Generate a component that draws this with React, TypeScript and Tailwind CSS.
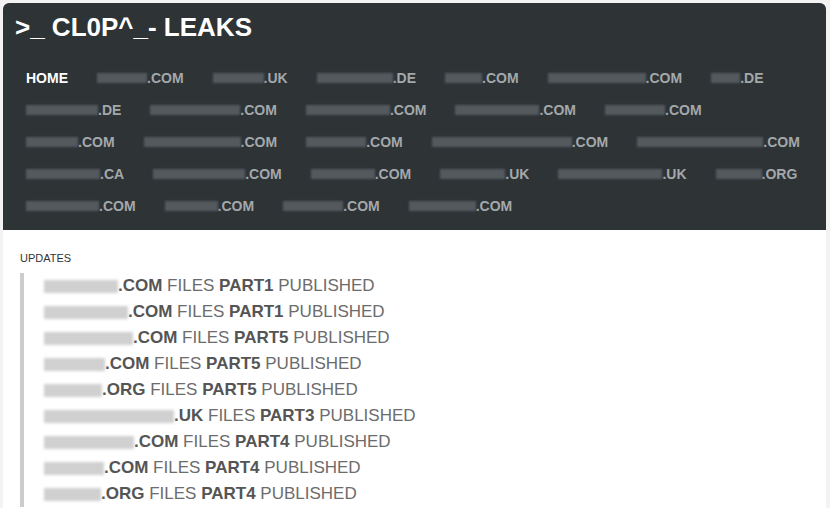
import React from "react";

type Item = [number, string];

const navRows: Item[][] = [
  [[50, ".COM"], [51, ".UK"], [76, ".DE"], [37, ".COM"], [98, ".COM"], [29, ".DE"]],
  [[72, ".DE"], [90, ".COM"], [84, ".COM"], [84, ".COM"], [60, ".COM"]],
  [[52, ".COM"], [97, ".COM"], [60, ".COM"], [140, ".COM"], [126, ".COM"]],
  [[74, ".CA"], [92, ".COM"], [64, ".COM"], [65, ".UK"], [104, ".UK"], [46, ".ORG"]],
  [[73, ".COM"], [53, ".COM"], [60, ".COM"], [67, ".COM"]],
];

const updates: [number, string, string][] = [
  [74, ".COM", "PART1"],
  [84, ".COM", "PART1"],
  [89, ".COM", "PART5"],
  [61, ".COM", "PART5"],
  [58, ".ORG", "PART5"],
  [130, ".UK", "PART3"],
  [90, ".COM", "PART4"],
  [60, ".COM", "PART4"],
  [57, ".ORG", "PART4"],
];

function NavItem({ w, tld }: { w: number; tld: string }) {
  return (
    <div className="flex items-center h-[32px]">
      <div className="h-[10px] bg-[#53595d] blur-[1px]" style={{ width: w }} />
      <span className="leading-[32px]">{tld}</span>
    </div>
  );
}

export default function App() {
  return (
    <div
      className="min-h-screen bg-[#f3f3f3] pl-[3px] pt-[3px] pr-[4px]"
      style={{ fontFamily: '"Liberation Sans", Arial, sans-serif' }}
    >
      <div className="bg-white min-h-[505px]">
        <div className="bg-[#2e3336] rounded-t-[6px] pl-[12px] pt-[9px] pb-[8px] h-[227px]">
          <div className="text-white font-bold text-[26px] leading-[30px]">&gt;_ CL0P^_- LEAKS</div>
          <nav className="mt-[20px] pl-[11px] text-[14px] font-bold text-[#a3a8ab]">
            {navRows.map((row, i) => (
              <div key={i} className="flex gap-x-[29px]">
                {i === 0 && (
                  <div className="h-[32px] leading-[32px] text-white">HOME</div>
                )}
                {row.map(([w, tld], j) => (
                  <NavItem key={j} w={w} tld={tld} />
                ))}
              </div>
            ))}
          </nav>
        </div>
        <div className="pl-[17px] pt-[20px]">
          <div className="text-[11px] leading-[16px] text-[#333]">UPDATES</div>
          <div className="mt-[7px] border-l-4 border-[#cccccc] pl-[20px]">
            {updates.map(([w, tld, part], i) => (
              <div key={i} className="flex items-center h-[26px] text-[17px] leading-[26px] text-[#6c6c6c]">
                <div className="h-[13px] bg-[#d0d0d0] blur-[1.5px]" style={{ width: w }} />
                <span className="font-bold text-[#555]">{tld}</span>
                <span className="whitespace-pre"> FILES </span>
                <span className="font-bold text-[#555]">{part}</span>
                <span className="whitespace-pre"> PUBLISHED</span>
              </div>
            ))}
          </div>
        </div>
      </div>
    </div>
  );
}
